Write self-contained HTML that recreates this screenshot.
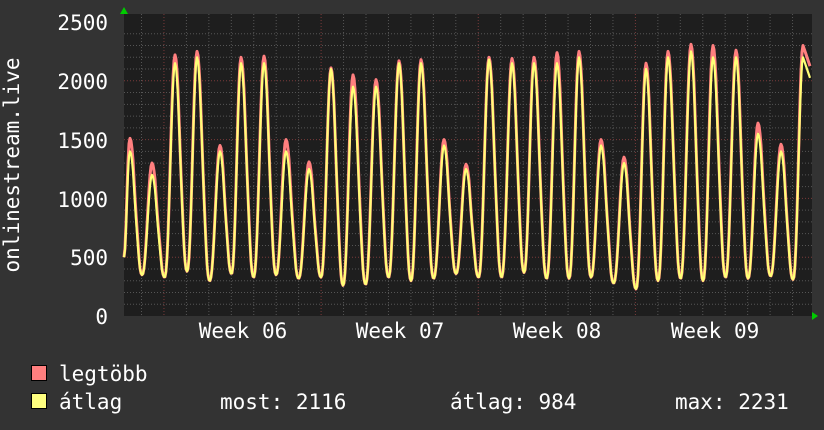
<!DOCTYPE html>
<html><head><meta charset="utf-8"><style>
html,body{margin:0;padding:0;background:#333;width:824px;height:430px;overflow:hidden}
svg{display:block}
text{font-family:"DejaVu Sans Mono","Liberation Mono",monospace;font-size:21px;fill:#fff}
</style></head><body>
<svg id="s" width="824" height="430" xmlns="http://www.w3.org/2000/svg">
<rect width="824" height="430" fill="#333"/>
<rect x="124" y="14" width="688" height="302" fill="#1e1e1e"/>
<g id="grid"></g>
<path id="mx" fill="none" stroke="#ff7f7f" stroke-width="3" stroke-linejoin="round"/>
<path id="av" fill="none" stroke="#ffff77" stroke-width="2.2" stroke-linejoin="round"/>
<polygon points="120,14 128,14 124,7" fill="#00cc00"/>
<polygon points="812,312 812,320 818,316" fill="#00cc00"/>
<g text-anchor="end">
<text x="108" y="30">2500</text>
<text x="108" y="89">2000</text>
<text x="108" y="148">1500</text>
<text x="108" y="207">1000</text>
<text x="108" y="265">500</text>
<text x="108" y="324">0</text>
</g>
<text transform="translate(19,165) rotate(-90)" text-anchor="middle">onlinestream.live</text>
<g text-anchor="middle">
<text x="243" y="338">Week 06</text>
<text x="400" y="338">Week 07</text>
<text x="557" y="338">Week 08</text>
<text x="715" y="338">Week 09</text>
</g>
<rect x="31.5" y="365.5" width="15" height="15" fill="#ff7f7f" stroke="#000"/>
<rect x="31.5" y="393.5" width="15" height="15" fill="#ffff7f" stroke="#000"/>
<text x="59" y="381">legtöbb</text>
<text x="59" y="409">átlag</text>
<text x="220" y="409">most: 2116</text>
<text x="450" y="409">átlag: 984</text>
<text x="675" y="409">max: 2231</text>
</svg>
<script>
var NS="http://www.w3.org/2000/svg",g=document.getElementById('grid');
function ln(x1,y1,x2,y2,c){var l=document.createElementNS(NS,'line');l.setAttribute('x1',x1);l.setAttribute('y1',y1);l.setAttribute('x2',x2);l.setAttribute('y2',y2);l.setAttribute('stroke',c);l.setAttribute('stroke-dasharray','1,2');g.appendChild(l);}
function Y(v){return 316-v*294/2500;}
for(var i=1;i<25;i++){var y=Y(i*100);ln(124,y,812,y,i%5==0?'#7a3a3a':'#555');}
for(var x=141.5;x<812;x+=22.45){var maj=[164,321,478,636].some(function(m){return Math.abs(m-x)<4});ln(x,14,x,316,maj?'#7a3a3a':'#555');}
var pk=[[130,1400,1510],[152,1200,1300],[175,2150,2220],[197,2200,2250],[220,1400,1450],[241,2150,2200],[264,2150,2210],[286,1400,1500],[309,1250,1310],[331,2100,2110],[353,1950,2050],[376,1950,2010],[399,2150,2170],[421,2150,2180],[444,1450,1500],[466,1250,1290],[489,2180,2200],[512,2150,2190],[534,2150,2200],[557,2150,2240],[579,2200,2250],[601,1450,1500],[624,1300,1350],[646,2100,2150],[668,2200,2250],[691,2250,2310],[713,2200,2300],[736,2200,2260],[758,1550,1640],[781,1400,1460],[803,2200,2300]];
var tr=[350,330,380,300,360,330,350,320,330,260,270,330,300,320,360,330,330,370,320,320,330,280,230,300,320,300,330,320,340,310];
function sh(f){var c=0.5+0.5*Math.cos(Math.PI*f);return Math.pow(c,1.15);}
function val(x,k){var i;for(i=0;i<pk.length;i++){if(pk[i][0]>x)break;}
var a=i-1,b=i;var p0=a>=0?pk[a]:null,p1=b<pk.length?pk[b]:null;
var t0=tr[Math.max(0,Math.min(tr.length-1,a))];
if(!p0){var f=(x-124)/(p1[0]-124);return 500+(p1[k]-500)*(1-sh(f));}
if(!p1){var d=(x-p0[0]);return p0[k]-d*25;}
var dx=p1[0]-p0[0],u=(x-p0[0])/dx,tu=0.55;
if(u<tu){var f=u/tu;return t0+(p0[k]-t0)*sh(f)+(k==2?30:15)*Math.sin(f*12)*(f>0.2&&f<0.8?1:0);}
var f2=(u-tu)/(1-tu);return t0+(p1[k]-t0)*sh(1-f2);}
function path(k){var s='';for(var x=124;x<=810;x+=1){var v=val(x,k);s+=(s?'L':'M')+x.toFixed(1)+','+Y(v).toFixed(1);}return s;}
document.getElementById('mx').setAttribute('d',path(2));
document.getElementById('av').setAttribute('d',path(1));
</script>
</body></html>
